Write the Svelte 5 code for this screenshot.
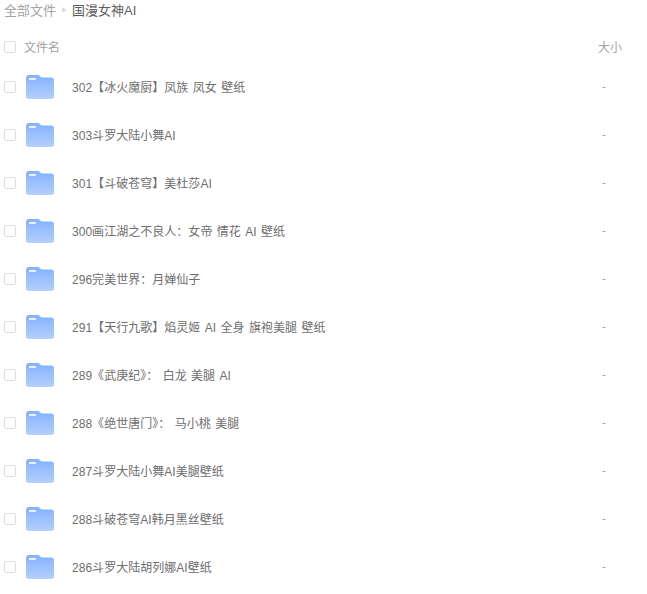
<script>
  const files = [
    "302【冰火魔厨】凤族 凤女 壁纸",
    "303斗罗大陆小舞AI",
    "301【斗破苍穹】美杜莎AI",
    "300画江湖之不良人：女帝 情花 AI 壁纸",
    "296完美世界：月婵仙子",
    "291【天行九歌】焰灵姬 AI 全身 旗袍美腿 壁纸",
    "289《武庚纪》： 白龙 美腿 AI",
    "288《绝世唐门》： 马小桃 美腿",
    "287斗罗大陆小舞AI美腿壁纸",
    "288斗破苍穹AI韩月黑丝壁纸",
    "286斗罗大陆胡列娜AI壁纸",
  ];
</script>

<div class="page">
  <div class="crumbs">
    <span class="root">全部文件</span>
    <span class="arrow"></span>
    <span class="current">国漫女神AI</span>
  </div>

  <div class="head">
    <span class="check"></span>
    <span class="head-name">文件名</span>
    <span class="size">大小</span>
  </div>

  {#each files as name}
    <div class="row">
      <span class="check"></span>
      <svg class="folder" width="28" height="24" viewBox="0 0 28 24">
        <defs>
          <linearGradient id="fold" x1="0" y1="0" x2="0" y2="1">
            <stop offset="0" stop-color="#84b1fb" />
            <stop offset="1" stop-color="#b3d0ff" />
          </linearGradient>
        </defs>
        <path
          d="M2.5 0H11.5C12.6 0 13.2 .4 13.9 1.1L15.2 2.4H25.5C26.9 2.4 28 3.5 28 4.9V21.5C28 22.9 26.9 24 25.5 24H2.5C1.1 24 0 22.9 0 21.5V2.5C0 1.1 1.1 0 2.5 0Z"
          fill="url(#fold)"
        />
        <rect x="3" y="3" width="7" height="2" rx="0.5" fill="#eaf2ff" />
      </svg>
      <span class="name">{name}</span>
      <span class="size dash">-</span>
    </div>
  {/each}
</div>

<style>
  :global(body) {
    margin: 0;
    background: #fff;
  }

  .page {
    width: 647px;
    height: 594px;
    overflow: hidden;
    font-family: "Liberation Sans", "Noto Sans CJK SC", sans-serif;
    font-size: 12px;
    color: #6e6e6e;
  }

  .crumbs {
    display: flex;
    align-items: center;
    height: 19px;
    padding-left: 4px;
    font-size: 13px;
  }

  .root {
    color: #a3a3a3;
  }

  .arrow {
    width: 0;
    height: 0;
    margin: 0 5px 0 6px;
    border-left: 5px solid #dedede;
    border-top: 3.5px solid transparent;
    border-bottom: 3.5px solid transparent;
  }

  .current {
    color: #5c5c5c;
  }

  .head {
    display: flex;
    align-items: center;
    height: 28px;
    margin: 14px 0 2px;
    padding-left: 4px;
    color: #a3a3a3;
  }

  .head-name {
    margin-left: 8px;
    padding-bottom: 2px;
  }

  .check {
    box-sizing: border-box;
    flex: none;
    width: 12px;
    height: 12px;
    border: 1px solid #ddd;
    border-radius: 2px;
  }

  .row {
    display: flex;
    align-items: center;
    height: 48px;
    padding-left: 4px;
  }

  .folder {
    flex: none;
    margin-left: 10px;
  }

  .name {
    margin-left: 18px;
    padding-bottom: 2px;
    word-spacing: 1px;
    letter-spacing: 0.03px;
  }

  .size {
    width: 24px;
    margin-left: auto;
    margin-right: 25px;
    padding-bottom: 2px;
    color: #a3a3a3;
  }

  .dash {
    padding: 0 0 0 4px;
    width: 20px;
  }
</style>
